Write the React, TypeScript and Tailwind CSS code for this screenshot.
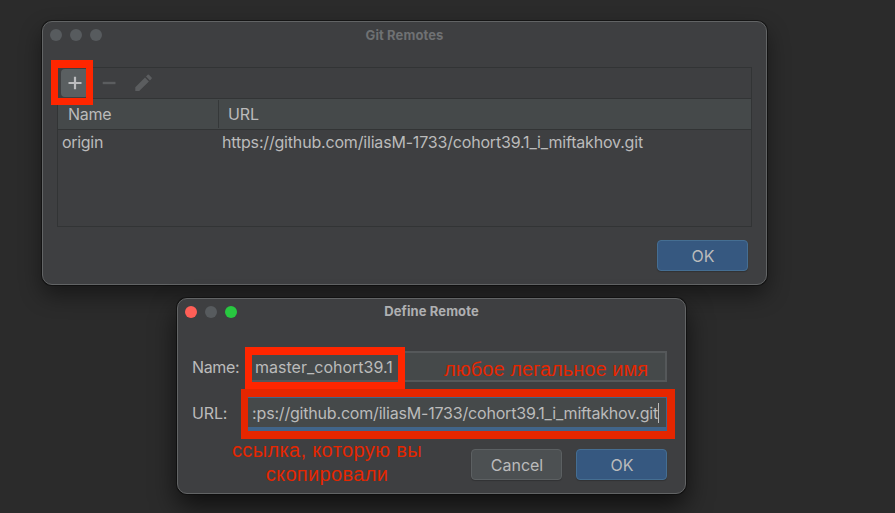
import type { ReactNode } from "react";

function Lights({ colors }: { colors: string[] }) {
  return (
    <div className="absolute left-[7px] top-[7px] flex gap-2">
      {colors.map((c, i) => (
        <span key={i} className={`size-3 rounded-full ${c}`} />
      ))}
    </div>
  );
}

function DialogButton({ primary, children }: { primary?: boolean; children: ReactNode }) {
  return (
    <button
      className={`h-[31px] w-[91px] rounded-[4px] border pl-px pt-px text-[16px] leading-none shadow-[0_1px_1px_rgba(0,0,0,0.2)] ${
        primary ? "border-[#456e92] bg-[#365880]" : "border-[#5c6062] bg-[#4c5052]"
      }`}
    >
      {children}
    </button>
  );
}

function GitRemotes() {
  return (
    <section className="absolute left-[42px] top-[21px] flex h-[264px] w-[725px] flex-col rounded-[10px] border border-[#626465] bg-[#3e3f41] pl-[14px] pr-[14px] shadow-[0_0_0_1px_rgba(10,10,10,0.6),0_10px_22px_rgba(0,0,0,0.45)]">
      <Lights colors={["bg-[#575b5e]", "bg-[#575b5e]", "bg-[#575b5e]"]} />
      <h1 className="h-[45px] pt-[5px] text-center text-[13px] font-bold leading-4 tracking-[0.1px] text-[#6f7173]">Git Remotes</h1>
      <div className="flex h-[160px] w-[695px] flex-col border border-[#323435]">
        <div className="flex h-[30px] items-center pl-[3px]">
          <div className="flex h-[28px] w-[28px] items-center justify-center rounded-[4px] bg-[#5a5f61]">
            <svg width="14" height="14" viewBox="0 0 14 14" className="text-[#bcbdbf]">
              <path d="M7 0.7V13.3M0.5 7H13.5" stroke="currentColor" strokeWidth="2.2" />
            </svg>
          </div>
          <svg width="14" height="14" viewBox="0 0 14 14" className="ml-[13px]">
            <path d="M0.7 7H13.5" stroke="#5b5d5f" strokeWidth="2.4" />
          </svg>
          <svg width="18" height="18" viewBox="0 0 18 18" className="ml-[18px]">
            <path d="M1.3 13.2L11 3.5L14.9 7.4L5.2 17.1H1.3ZM12 2.5L13.7 .8Q14.3 .2 14.9 .8L17.6 3.5Q18.2 4.1 17.6 4.7L15.9 6.4Z" fill="#5b5d5f" />
          </svg>
        </div>
        <div className="flex h-[32px] items-center border-y border-[#323435] bg-[#45494a] text-[16px]">
          <div className="flex h-[28px] w-[161px] items-center border-r border-[#353839] pl-[10px]">
            <span className="-mt-px tracking-[-0.25px]">Name</span>
          </div>
          <div className="-mt-px pl-[9px] tracking-[-0.15px]">URL</div>
        </div>
        <div className="flex h-[24px] items-center text-[16px]">
          <div className="w-[160px] pl-1 tracking-[-0.3px]">origin</div>
          <div className="whitespace-nowrap pl-1 tracking-[-0.18px]">https://github.com/iliasM-1733/cohort39.1_i_miftakhov.git</div>
        </div>
      </div>
      <div className="mt-[13px] flex justify-end pr-1">
        <DialogButton primary>OK</DialogButton>
      </div>
    </section>
  );
}

function DefineRemote() {
  return (
    <section className="absolute left-[177px] top-[298px] flex h-[196px] w-[509px] flex-col rounded-[10px] border border-[#626465] bg-[#3e3f41] pl-[14px] pr-[18px] text-[16px] shadow-[0_0_0_1px_rgba(10,10,10,0.6),0_12px_26px_rgba(0,0,0,0.65)]">
      <Lights colors={["bg-[#ff5f57]", "bg-[#575b5e]", "bg-[#28c840]"]} />
      <h1 className="h-[52px] pl-1 pt-[4px] text-center text-[13px] font-bold leading-4 tracking-[0.1px] text-[#afb0b2]">Define Remote</h1>
      <div className="flex h-[31px] items-center">
        <label className="w-[55px] tracking-[-0.35px]">Name:</label>
        <div className="flex h-[31px] flex-1 items-center border-2 border-[#55585a] bg-[#45494a] pl-[6px] tracking-[0.01px]">master_cohort39.1</div>
      </div>
      <div className="mt-[15px] flex h-[34px] items-center">
        <label className="w-[55px] pb-[2px] tracking-[-0.15px]">URL:</label>
        <div className="flex h-[34px] min-w-0 flex-1 items-center justify-end border border-b-4 border-[#41658a] bg-[#45494a] pr-[7px]">
          <span className="whitespace-nowrap tracking-[-0.19px]">:ps://github.com/iliasM-1733/cohort39.1_i_miftakhov.git</span>
          <span className="h-[20px] w-px bg-[#bbbbbb]" />
        </div>
      </div>
      <div className="mt-[18px] flex justify-end gap-[14px]">
        <DialogButton>Cancel</DialogButton>
        <DialogButton primary>OK</DialogButton>
      </div>
    </section>
  );
}

export default function App() {
  return (
    <main className="relative h-[513px] w-[895px] overflow-hidden bg-[#2b2b2b] font-[Inter,'Liberation_Sans',sans-serif] text-[#bbbbbb]">
      <GitRemotes />
      <DefineRemote />
      <div className="absolute left-[51px] top-[60px] h-[45px] w-[42px] border-[7.5px] border-t-8 border-[#ff2600]" />
      <div className="absolute left-[245px] top-[347px] h-[43px] w-[160px] border-[7px] border-y-8 border-[#ff2600]" />
      <div className="absolute left-[241px] top-[389px] h-[50px] w-[434px] border-[8px] border-l-7 border-[#e52600]" />
      <p className="absolute left-[444px] top-[357px] whitespace-nowrap font-['Liberation_Sans',Arial,sans-serif] text-[20px] leading-6 tracking-[0.04px] text-[#e52600]">любое легальное имя</p>
      <p className="absolute left-[227px] top-[438px] w-[200px] whitespace-nowrap text-center font-['Liberation_Sans',Arial,sans-serif] text-[20px] leading-6 tracking-[0.35px] text-[#e52600]">
        ссылка, которую вы
        <br />
        скопировали
      </p>
    </main>
  );
}
